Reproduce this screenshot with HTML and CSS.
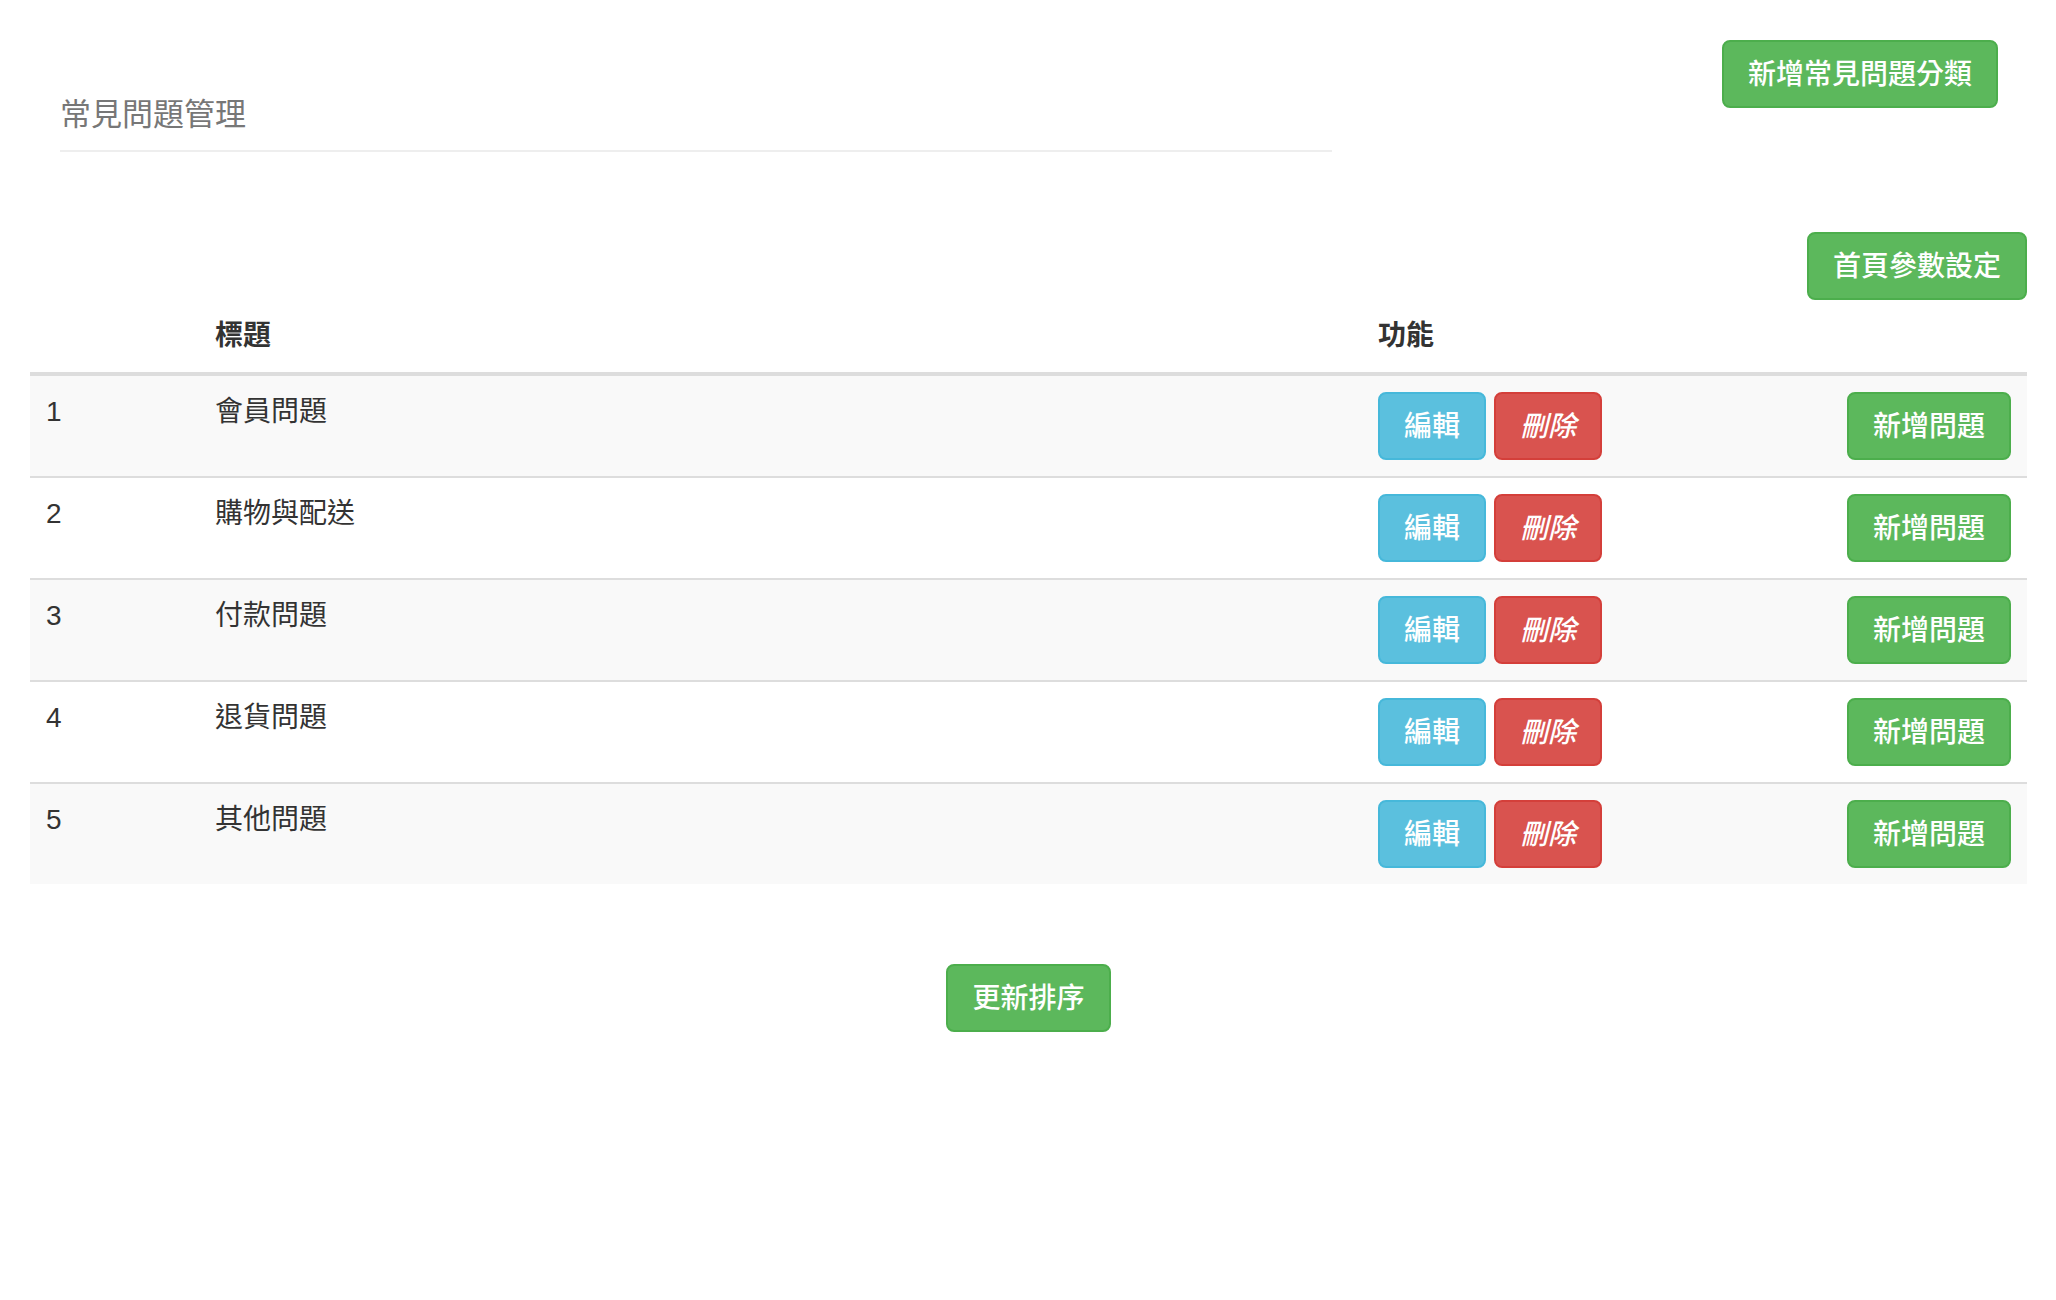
FILE: index.html
```html
<!DOCTYPE html>
<html lang="zh-Hant">
<head>
  <meta charset="UTF-8">
  <meta name="viewport" content="width=device-width, initial-scale=1.0">
  <title>常見問題管理</title>
  <link rel="stylesheet" href="styles.css">
</head>
<body>
  <div class="page">
    <div class="header">
      <div class="page-header">
        <h1 class="page-title">常見問題管理</h1>
      </div>
      <button class="btn btn-success btn-top">新增常見問題分類</button>
    </div>

    <div class="toolbar">
      <button class="btn btn-success">首頁參數設定</button>
    </div>

    <table class="faq-table">
      <thead>
        <tr>
          <th class="col-no"></th>
          <th class="col-title">標題</th>
          <th class="col-actions">功能</th>
        </tr>
      </thead>
      <tbody>
        <tr>
          <td>1</td>
          <td>會員問題</td>
          <td>
            <div class="actions">
              <button class="btn btn-info">編輯</button>
              <button class="btn btn-danger">刪除</button>
              <button class="btn btn-success btn-add">新增問題</button>
            </div>
          </td>
        </tr>
        <tr>
          <td>2</td>
          <td>購物與配送</td>
          <td>
            <div class="actions">
              <button class="btn btn-info">編輯</button>
              <button class="btn btn-danger">刪除</button>
              <button class="btn btn-success btn-add">新增問題</button>
            </div>
          </td>
        </tr>
        <tr>
          <td>3</td>
          <td>付款問題</td>
          <td>
            <div class="actions">
              <button class="btn btn-info">編輯</button>
              <button class="btn btn-danger">刪除</button>
              <button class="btn btn-success btn-add">新增問題</button>
            </div>
          </td>
        </tr>
        <tr>
          <td>4</td>
          <td>退貨問題</td>
          <td>
            <div class="actions">
              <button class="btn btn-info">編輯</button>
              <button class="btn btn-danger">刪除</button>
              <button class="btn btn-success btn-add">新增問題</button>
            </div>
          </td>
        </tr>
        <tr>
          <td>5</td>
          <td>其他問題</td>
          <td>
            <div class="actions">
              <button class="btn btn-info">編輯</button>
              <button class="btn btn-danger">刪除</button>
              <button class="btn btn-success btn-add">新增問題</button>
            </div>
          </td>
        </tr>
      </tbody>
    </table>

    <div class="footer">
      <button class="btn btn-success">更新排序</button>
    </div>
  </div>
</body>
</html>
```

FILE: styles.css
```css
body {
  margin: 0;
  font-family: "Liberation Sans", "Noto Sans CJK TC", sans-serif;
  font-size: 28px;
  line-height: 40px;
  color: #333;
  background-color: #fff;
}
.page {
  padding: 0 29px 0 30px;
}
.header {
  display: flex;
  align-items: flex-start;
}
.page-header {
  margin-left: 30px;
  margin-top: 93px;
  width: 1272px;
  padding-bottom: 13px;
  border-bottom: 2px solid #eee;
}
.page-title {
  margin: 0;
  font-size: 31px;
  line-height: 44px;
  font-weight: normal;
  color: #777;
}
.btn-top {
  margin-left: auto;
  margin-top: 40px;
  margin-right: 29px;
}
.btn {
  font-family: "Liberation Sans", "Noto Sans CJK TC", sans-serif;
  font-size: 28px;
  line-height: 40px;
  font-weight: 500;
  padding: 13px 24px 11px;
  border: 2px solid transparent;
  border-radius: 8px;
  color: #fff;
  cursor: pointer;
  white-space: nowrap;
}
.btn-success {
  background-color: #5cb85c;
  border-color: #4cae4c;
}
.btn-info {
  background-color: #5bc0de;
  border-color: #46b8da;
}
.btn-danger {
  background-color: #d9534f;
  border-color: #d43f3a;
  font-style: italic;
}
.toolbar {
  display: flex;
  justify-content: flex-end;
  margin-top: 80px;
}
.faq-table {
  width: 100%;
  border-collapse: collapse;
  margin-bottom: 80px;
}
.faq-table th {
  text-align: left;
  font-weight: bold;
  padding: 16px;
  border-bottom: 4px solid #ddd;
}
.faq-table td {
  padding: 16px;
  vertical-align: top;
  border-top: 2px solid #ddd;
}
.faq-table tbody tr:nth-child(odd) {
  background-color: #f9f9f9;
}
.col-no {
  width: 137px;
}
.col-title {
  width: 1131px;
}
.actions {
  display: flex;
  gap: 8px;
}
.btn-add {
  margin-left: auto;
}
.footer {
  display: flex;
  justify-content: center;
}
```
